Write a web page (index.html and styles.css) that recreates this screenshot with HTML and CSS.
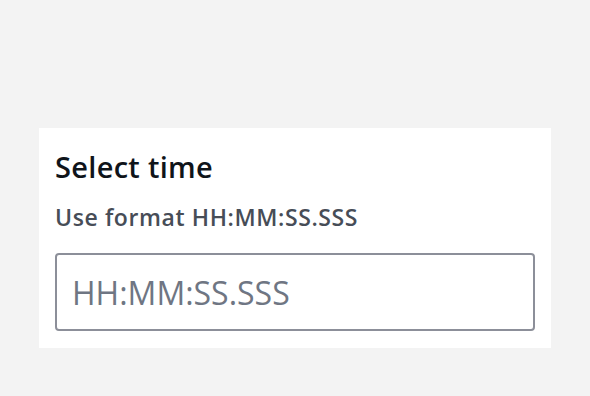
FILE: index.html
```html
<!DOCTYPE html>
<html lang="en">

<head>
    <meta charset="UTF-8">
    <meta name="viewport" content="width=device-width, initial-scale=1.0">
    <title>Select time</title>
    <link rel="stylesheet" href="styles.css">
</head>

<body>
    <div class="panel">
        <label class="label" for="time">Select time</label>
        <div class="hint">Use format HH:MM:SS.SSS</div>
        <input class="field" id="time" type="text" placeholder="HH:MM:SS.SSS">
    </div>
</body>

</html>
```

FILE: styles.css
```css
body {
    margin: 0;
    padding: 128px 0 0 39px;
    background-color: #f3f3f3;
    font-family: "Open Sans", "Liberation Sans", sans-serif;
}

.panel {
    width: 512px;
    height: 220px;
    box-sizing: border-box;
    padding: 19px 16px 16px;
    background-color: #ffffff;
}

.label {
    display: block;
    font-size: 29px;
    font-weight: 600;
    line-height: 40px;
    letter-spacing: 0.3px;
    color: #0f141a;
}

.hint {
    font-size: 23px;
    font-weight: 600;
    line-height: 32px;
    letter-spacing: 0.6px;
    color: #474d57;
    margin-top: 14px;
}

.field {
    display: block;
    box-sizing: border-box;
    width: 480px;
    height: 78px;
    margin-top: 20px;
    padding: 0 15px;
    border: 2px solid #8c8f99;
    border-radius: 4px;
    font-family: inherit;
    font-size: 32px;
    color: #0f141a;
    outline: none;
}

.field::placeholder {
    color: #6f7683;
}
```
